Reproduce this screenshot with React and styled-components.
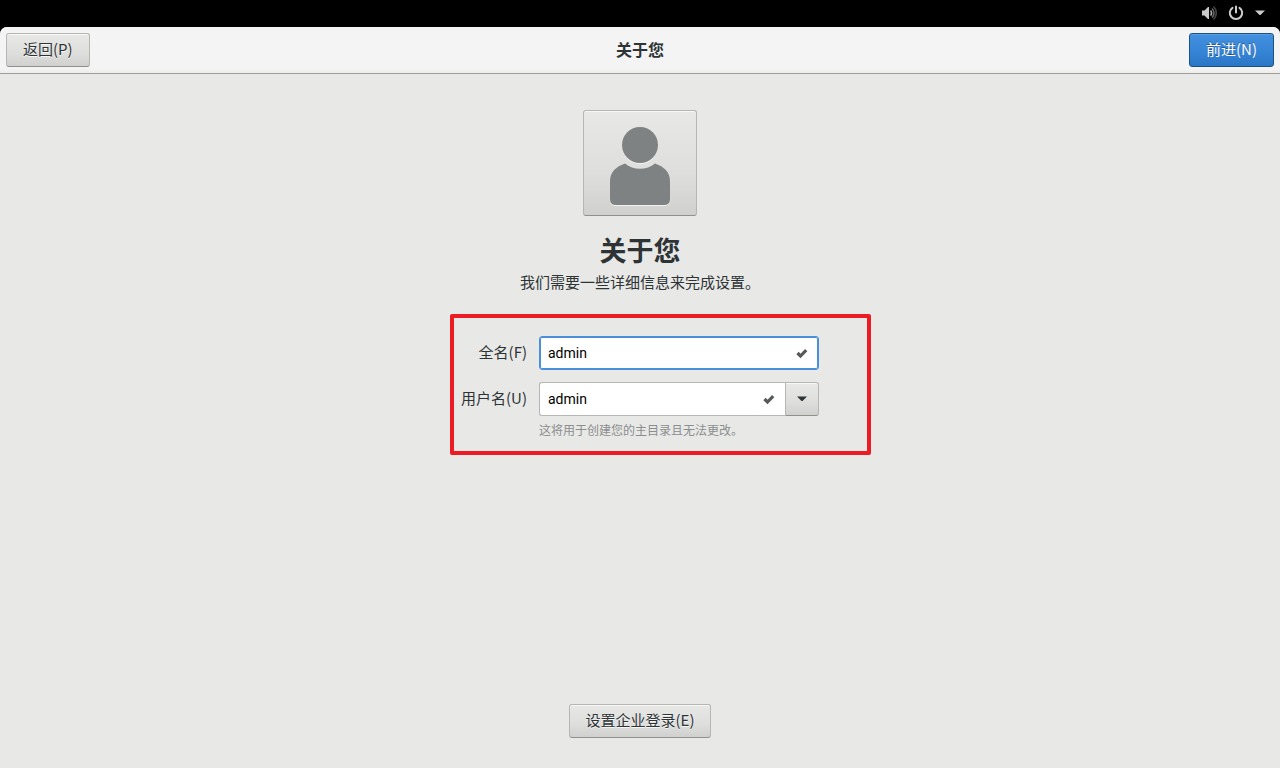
import React, { useState } from "react";
import styled, { createGlobalStyle, css } from "styled-components";

const GlobalStyle = createGlobalStyle`
  *, *::before, *::after { box-sizing: border-box; }
  body {
    margin: 0;
    background: #000;
    color: #2e3436;
    font: 15px/20px "Noto Sans CJK SC", "Noto Sans", sans-serif;
  }
  h1, h2, p { margin: 0; }
  button, input { font: inherit; color: inherit; }
`;

const Screen = styled.div`
  display: flex;
  flex-direction: column;
  min-height: 100vh;
`;

const TopBar = styled.div`
  display: flex;
  align-items: center;
  justify-content: flex-end;
  height: 27px;
  padding: 0 15px 1px 0;
  background: #000;
`;

const StatusButton = styled.button`
  display: flex;
  align-items: center;
  gap: 11px;
  padding: 0;
  border: 0;
  background: none;
  color: #ccc;
`;

const Window = styled.div`
  flex: 1;
  display: flex;
  flex-direction: column;
  overflow: hidden;
  border-radius: 7px 7px 0 0;
  background: #e8e8e6;
`;

const HeaderBar = styled.header`
  display: grid;
  grid-template-columns: 1fr auto 1fr;
  align-items: center;
  height: 47px;
  padding: 0 6px;
  background: linear-gradient(#f4f4f4 90%, #ededeb);
  border-bottom: 1px solid #9d9d99;
`;

const Title = styled.h1`
  grid-column: 2;
  padding-bottom: 2px;
  font-size: 16px;
  font-weight: 700;
`;

const raised = css`
  border: 1px solid #b6b6b3;
  border-bottom-color: #91918c;
  border-radius: 3px;
  background: linear-gradient(#e8e8e7, #dededd 60%, #d0d0ce);
  box-shadow: inset 0 1px #f8f8f7;
`;

const Button = styled.button`
  ${raised}
  height: 34px;
  padding: 0 16px 2px;
  text-shadow: 0 1px rgba(255, 255, 255, 0.75);
  ${({ $end }) => $end && css`
    grid-column: 3;
    justify-self: end;
  `}
  ${({ $start }) => $start && css`justify-self: start;`}
  ${({ $primary }) => $primary && css`
    border-color: #1c5187;
    color: #fff;
    background: linear-gradient(#4390df, #3583d5 60%, #2a76c6);
    box-shadow: inset 0 1px #5b9fe3;
    text-shadow: 0 -1px rgba(0, 0, 0, 0.4);
  `}
`;

const Content = styled.main`
  flex: 1;
  display: flex;
  flex-direction: column;
  align-items: center;
  padding: 36px 0 30px;
`;

const AvatarButton = styled.button`
  ${raised}
  display: flex;
  justify-content: center;
  align-items: flex-end;
  width: 114px;
  height: 106px;
  padding: 0 0 8px;
`;

const Heading = styled.h2`
  margin-top: 16px;
  font-size: 27px;
  line-height: 36px;
`;

const Subtitle = styled.p`
  margin-top: 4px;
`;

const Form = styled.form`
  position: relative;
  display: grid;
  grid-template-columns: auto 280px;
  column-gap: 12px;
  row-gap: 12px;
  align-items: center;
  margin-top: 44px;
  margin-bottom: 40px;

  &::after {
    content: "";
    position: absolute;
    inset: -22px -52px -15px -11px;
    border: 4px solid #ed1c24;
    border-radius: 2px;
    pointer-events: none;
  }
`;

const Label = styled.label`
  padding-bottom: 2px;
  text-align: right;
`;

const Field = styled.div`
  display: flex;
  align-items: center;
  height: 34px;
  padding-right: 8px;
  border: 1px solid #b6b6b3;
  border-radius: 3px;
  background: #fff;

  &:focus-within {
    border-color: #4a90d9;
    box-shadow: inset 0 0 0 1px #4a90d9;
  }
  ${({ $active }) => $active && css`
    border-color: #4a90d9;
    box-shadow: inset 0 0 0 1px #4a90d9;
  `}
  ${({ $joined }) => $joined && css`
    flex: 1;
    border-right: 0;
    border-radius: 3px 0 0 3px;
  `}
`;

const TextInput = styled.input`
  flex: 1;
  min-width: 0;
  padding: 0 8px;
  border: 0;
  outline: 0;
  background: none;
  color: #000;
  font-family: Roboto, "Noto Sans CJK SC", sans-serif;
  font-size: 14px;
`;

const Combo = styled.div`
  display: flex;
`;

const ComboButton = styled.button`
  ${raised}
  display: flex;
  align-items: center;
  justify-content: center;
  width: 34px;
  height: 34px;
  padding: 0;
  border-radius: 0 3px 3px 0;
`;

const Hint = styled.p`
  grid-column: 2;
  margin-top: -8px;
  color: #8b8e8f;
  font-size: 12px;
`;

const Footer = styled.footer`
  margin-top: auto;
`;

const VolumeIcon = () => (
  <svg width="16" height="16" viewBox="0 0 16 16" fill="none" aria-hidden="true">
    <path d="M1 5.500h2.500L7 2h1v12H7L3.500 10.500H1z" fill="currentColor" />
    <path d="M9.500 5.500a3.500 3.500 0 0 1 0 5" stroke="#aaa" strokeWidth="1.700" />
    <path d="M11 3.500a6 6 0 0 1 0 9" stroke="#666" strokeWidth="1.600" />
    <path d="M12.500 1.500a9 9 0 0 1 0 13" stroke="#444" strokeWidth="1.600" />
  </svg>
);

const PowerIcon = () => (
  <svg width="16" height="16" viewBox="0 0 16 16" fill="none" stroke="currentColor" strokeWidth="2" strokeLinecap="round" aria-hidden="true">
    <path d="M8 1.500v6M4.500 2.800a6.200 6.200 0 1 0 7 0" />
  </svg>
);

const ArrowIcon = () => (
  <svg width="10" height="6" viewBox="0 0 10 6" aria-hidden="true">
    <path d="M0 .5h10L5.500 5h-1z" fill="currentColor" />
  </svg>
);

const CheckIcon = () => (
  <svg width="16" height="16" viewBox="0 0 16 16" fill="none" aria-hidden="true">
    <path d="M3.500 8 6.500 11 12.200 5.200" stroke="#555a5b" strokeWidth="3.200" />
  </svg>
);

const UserIcon = () => (
  <svg width="64" height="80" viewBox="0 0 64 80" fill="#7e8282" aria-hidden="true">
    <g fill="#f0f0ef" transform="translate(0 1)">
      <circle cx="32" cy="18" r="18" />
      <path d="M17 36.500C7 40 2 46 2 54v18q0 6 6 6h48q6 0 6-6V54c0-8-5-14-15-17.500-8 7-22 7-30 0z" />
    </g>
    <circle cx="32" cy="18" r="18" />
    <path d="M17 36.500C7 40 2 46 2 54v18q0 6 6 6h48q6 0 6-6V54c0-8-5-14-15-17.500-8 7-22 7-30 0z" />
  </svg>
);

export default function App() {
  const [fullName, setFullName] = useState("admin");
  const [userName, setUserName] = useState("admin");

  return (
    <>
      <GlobalStyle />
      <Screen>
        <TopBar>
          <StatusButton type="button" aria-label="系统菜单">
            <VolumeIcon />
            <PowerIcon />
            <ArrowIcon />
          </StatusButton>
        </TopBar>
        <Window>
          <HeaderBar>
            <Button type="button" $start>返回(P)</Button>
            <Title>关于您</Title>
            <Button type="submit" form="account" $primary $end>前进(N)</Button>
          </HeaderBar>
          <Content>
            <AvatarButton type="button" aria-label="头像">
              <UserIcon />
            </AvatarButton>
            <Heading>关于您</Heading>
            <Subtitle>我们需要一些详细信息来完成设置。</Subtitle>
            <Form id="account" onSubmit={(e) => e.preventDefault()}>
              <Label htmlFor="full-name">全名(F)</Label>
              <Field $active>
                <TextInput id="full-name" value={fullName} onChange={(e) => setFullName(e.target.value)} />
                <CheckIcon />
              </Field>
              <Label htmlFor="user-name">用户名(U)</Label>
              <Combo>
                <Field $joined>
                  <TextInput id="user-name" value={userName} onChange={(e) => setUserName(e.target.value)} />
                  <CheckIcon />
                </Field>
                <ComboButton type="button" aria-label="选择用户名">
                  <ArrowIcon />
                </ComboButton>
              </Combo>
              <Hint>这将用于创建您的主目录且无法更改。</Hint>
            </Form>
            <Footer>
              <Button type="button">设置企业登录(E)</Button>
            </Footer>
          </Content>
        </Window>
      </Screen>
    </>
  );
}
